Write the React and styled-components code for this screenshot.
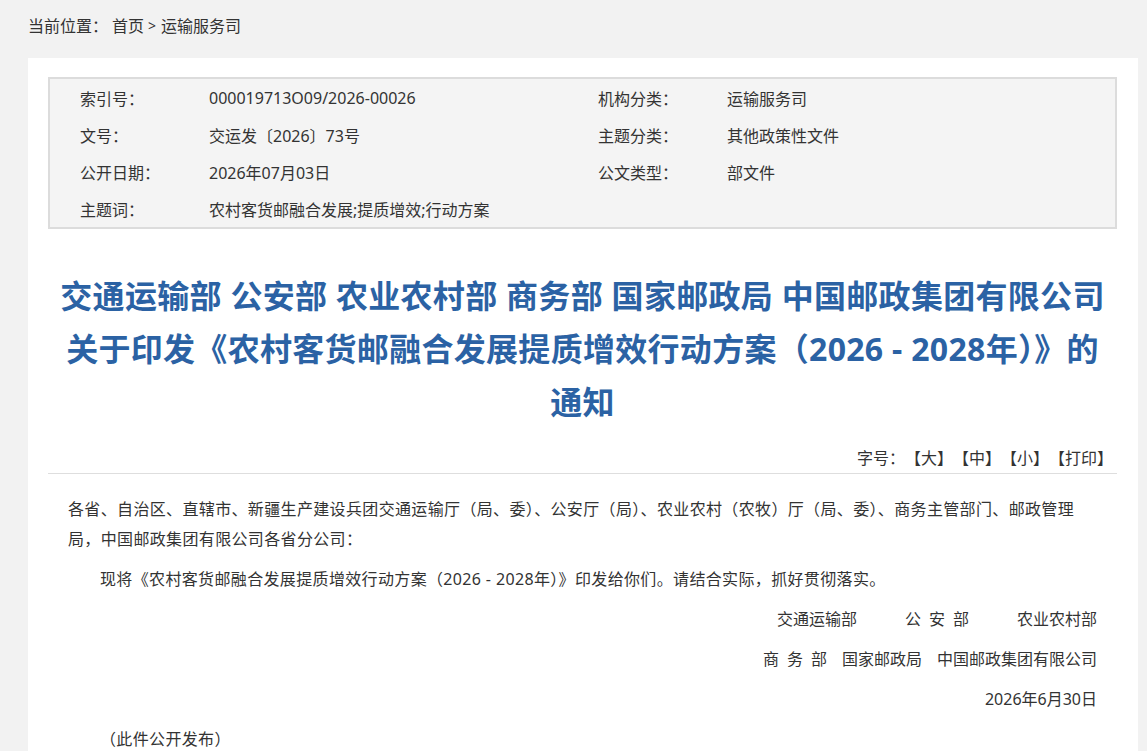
import React from 'react';
import styled, { createGlobalStyle } from 'styled-components';

const GlobalStyle = createGlobalStyle`
  html, body {
    margin: 0;
    padding: 0;
    background: #f2f2f2;
  }
  body {
    font-family: "Noto Sans", "Noto Sans CJK SC", "Microsoft YaHei", sans-serif;
    color: #333;
  }
`;

const info = [
  ['索引号：', '000019713O09/2026-00026', '机构分类：', '运输服务司'],
  ['文号：', '交运发〔2026〕73号', '主题分类：', '其他政策性文件'],
  ['公开日期：', '2026年07月03日', '公文类型：', '部文件'],
  ['主题词：', '农村客货邮融合发展;提质增效;行动方案', '', ''],
];

const App = () => {
  return (
    <>
      <GlobalStyle />
      <Page>
        <Crumb>
          <span>当前位置：</span>
          <CrumbLink>首页</CrumbLink>
          <CrumbSep>&gt;</CrumbSep>
          <CrumbLink>运输服务司</CrumbLink>
        </Crumb>

        <Panel>
          <InfoBox>
            {info.map((row, i) => (
              <React.Fragment key={i}>
                <Label>{row[0]}</Label>
                <Value>{row[1]}</Value>
                <Label>{row[2]}</Label>
                <Value>{row[3]}</Value>
              </React.Fragment>
            ))}
          </InfoBox>

          <Title>
            交通运输部 公安部 农业农村部 商务部 国家邮政局 中国邮政集团有限公司
            <br />
            关于印发《农村客货邮融合发展提质增效行动方案（2026 - 2028年）》的
            <br />
            通知
          </Title>

          <SizeBar>
            字号：<SizeBtn>【大】</SizeBtn><SizeBtn>【中】</SizeBtn><SizeBtn>【小】</SizeBtn><SizeBtn>【打印】</SizeBtn>
          </SizeBar>

          <Body>
            <Para>
              各省、自治区、直辖市、新疆生产建设兵团交通运输厅（局、委）、公安厅（局）、农业农村（农牧）厅（局、委）、商务主管部门、邮政管理局，中国邮政集团有限公司各省分公司：
            </Para>
            <Para indent>
              现将《农村客货邮融合发展提质增效行动方案（2026 - 2028年）》印发给你们。请结合实际，抓好贯彻落实。
            </Para>
            <SignRow gap={48}>
              <span>交通运输部</span>
              <span>公&ensp;安&ensp;部</span>
              <span>农业农村部</span>
            </SignRow>
            <SignRow gap={15}>
              <span>商&ensp;务&ensp;部</span>
              <span>国家邮政局</span>
              <span>中国邮政集团有限公司</span>
            </SignRow>
            <SignRow gap={0}>
              <span>2026年6月30日</span>
            </SignRow>
            <Para indent>（此件公开发布）</Para>
          </Body>
        </Panel>
      </Page>
    </>
  );
};

export default App;

const Page = styled.div`
  width: 1110px;
  margin-left: 28px;
`;

const Crumb = styled.div`
  height: 58px;
  display: flex;
  align-items: flex-start;
  padding-top: 14px;
  box-sizing: border-box;
  font-size: 16px;
  line-height: 24px;
  color: #333;
`;

const CrumbLink = styled.a`
  color: #333;
  cursor: pointer;
  &:first-of-type {
    margin-left: 4px;
  }
`;

const CrumbSep = styled.span`
  margin: 0 5px 0 4px;
  font-size: 14px;
`;

const Panel = styled.div`
  background: #fff;
  padding: 19px 21px 40px 20px;
  min-height: 700px;
`;

const InfoBox = styled.div`
  display: grid;
  grid-template-columns: 129px 389px 129px 1fr;
  grid-auto-rows: 37px;
  align-items: center;
  padding-left: 30px;
  background: #f4f4f4;
  border: 2px solid #dcdcdc;
  font-size: 16px;
`;

const Label = styled.div`
  color: #333;
`;

const Value = styled.div`
  color: #333;
`;

const Title = styled.h1`
  margin: 40px 0 0;
  text-align: center;
  font-size: 32px;
  line-height: 53px;
  font-weight: 700;
  letter-spacing: 0.3px;
  color: #2b62a4;
`;

const SizeBar = styled.div`
  display: flex;
  justify-content: flex-end;
  padding-right: 4px;
  height: 30px;
  margin-top: 15px;
  line-height: 30px;
  font-size: 16px;
  color: #333;
  border-bottom: 1px solid #dedede;
`;

const SizeBtn = styled.span`
  cursor: pointer;
`;

const Body = styled.div`
  padding: 20px 20px 0;
  font-size: 16px;
  line-height: 30px;
  color: #333;
`;

const Para = styled.p`
  margin: 0 0 10px;
  padding-right: 14px;
  letter-spacing: 0.35px;
  text-indent: ${props => (props.indent ? '2em' : '0')};
`;

const SignRow = styled.div`
  display: flex;
  justify-content: flex-end;
  gap: ${props => props.gap}px;
  margin-bottom: 10px;
`;
